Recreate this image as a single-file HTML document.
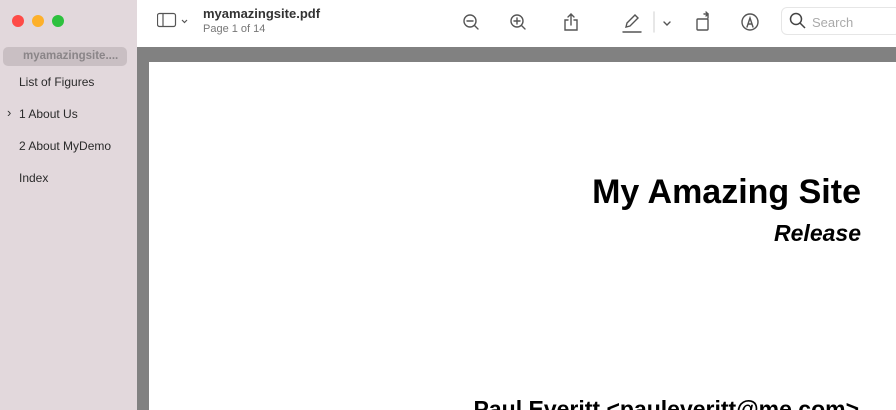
<!DOCTYPE html>
<html><head><meta charset="utf-8"><style>
*{margin:0;padding:0;box-sizing:border-box}
html,body{width:896px;height:410px;overflow:hidden}
body{position:relative;background:#fff;font-family:"Liberation Sans",sans-serif}
.side{position:absolute;left:0;top:0;width:137px;height:410px;background:#e2d8dc}
.dot{position:absolute;top:15px;width:12px;height:12px;border-radius:50%}
.item{position:absolute;left:19px;font-size:12px;color:#2a2a2a}
.sel{position:absolute;left:3px;top:47px;width:124px;height:19px;background:#c9bfc3;border-radius:5px;color:#8a8588;font-size:11.5px;font-weight:bold;padding:3px 0 0 20px}
.gray{position:absolute;left:137px;top:47px;width:759px;height:363px;background:#818181}
.page{position:absolute;left:149px;top:62px;width:747px;height:348px;background:#fff}
.t{position:absolute;right:35px;font-weight:bold;color:#000;white-space:nowrap}
svg{position:absolute}
</style></head><body>
<div class="side">
<div class="dot" style="left:12px;background:#fe4b47"></div>
<div class="dot" style="left:32px;background:#fdb02a"></div>
<div class="dot" style="left:52px;background:#2dc13e"></div>
<div class="sel">myamazingsite....</div>
<div class="item" style="top:75px">List of Figures</div>
<div class="item" style="top:107px">1 About Us</div>
<div style="position:absolute;left:7px;top:105px;font-size:13px;color:#333">›</div>
<div class="item" style="top:139px">2 About MyDemo</div>
<div class="item" style="top:171px">Index</div>
</div>
<svg style="left:157px;top:12px" width="36" height="18" viewBox="0 0 36 18"><rect x="0.5" y="1.5" width="18" height="13" rx="2" fill="none" stroke="#555" stroke-width="1.2"/><line x1="6" y1="2" x2="6" y2="14" stroke="#555" stroke-width="1.2"/><path d="M25 8l2.5 2.5L30 8" fill="none" stroke="#555" stroke-width="1.2"/></svg>
<div style="position:absolute;left:203px;top:6px;font-size:13px;font-weight:bold;color:#333">myamazingsite.pdf</div>
<div style="position:absolute;left:203px;top:23px;font-size:11px;color:#777">Page 1 of 14</div>
<svg style="left:460px;top:10px" width="300" height="26" viewBox="0 0 300 26" fill="none" stroke="#555" stroke-width="1.4" stroke-linecap="round">
<circle cx="10" cy="11" r="6"/><line x1="14.5" y1="15.5" x2="18" y2="19"/><line x1="7" y1="11" x2="13" y2="11"/>
<circle cx="57" cy="11" r="6"/><line x1="61.5" y1="15.5" x2="65" y2="19"/><line x1="54" y1="11" x2="60" y2="11"/><line x1="57" y1="8" x2="57" y2="14"/>
<path d="M108 10h-3v10h12V10h-3M111 15V4M108 7l3-3 3 3"/>
<path d="M166 17l1-4 8-8 3 3-8 8z"/><line x1="163" y1="22" x2="181" y2="22"/>
<line x1="194" y1="2" x2="194" y2="22" stroke="#ddd"/>
<path d="M204 12l3 3 3-3"/>
<rect x="237" y="9" width="11" height="11" rx="1"/><path d="M244 4h4v4M246 2l2 2-2 2"/>
<circle cx="290" cy="12" r="8"/><path d="M287 17l3-9 3 9M288 14h4"/>
</svg>
<div style="position:absolute;left:781px;top:7px;width:120px;height:28px;border:1px solid #e6e6e6;border-radius:6px"></div>
<svg style="left:789px;top:12px" width="18" height="18" viewBox="0 0 18 18" fill="none" stroke="#444" stroke-width="1.5"><circle cx="7" cy="7" r="5.5"/><line x1="11" y1="11" x2="16" y2="16"/></svg>
<div style="position:absolute;left:812px;top:15px;font-size:13px;color:#aaa">Search</div>
<div class="gray"></div>
<div class="page"></div>
<div class="t" style="top:173px;font-size:34px">My Amazing Site</div>
<div class="t" style="top:220px;font-size:23px;font-style:italic">Release</div>
<div class="t" style="top:396px;font-size:23px;right:37px">Paul Everitt &lt;pauleveritt@me.com&gt;</div>
</body></html>
